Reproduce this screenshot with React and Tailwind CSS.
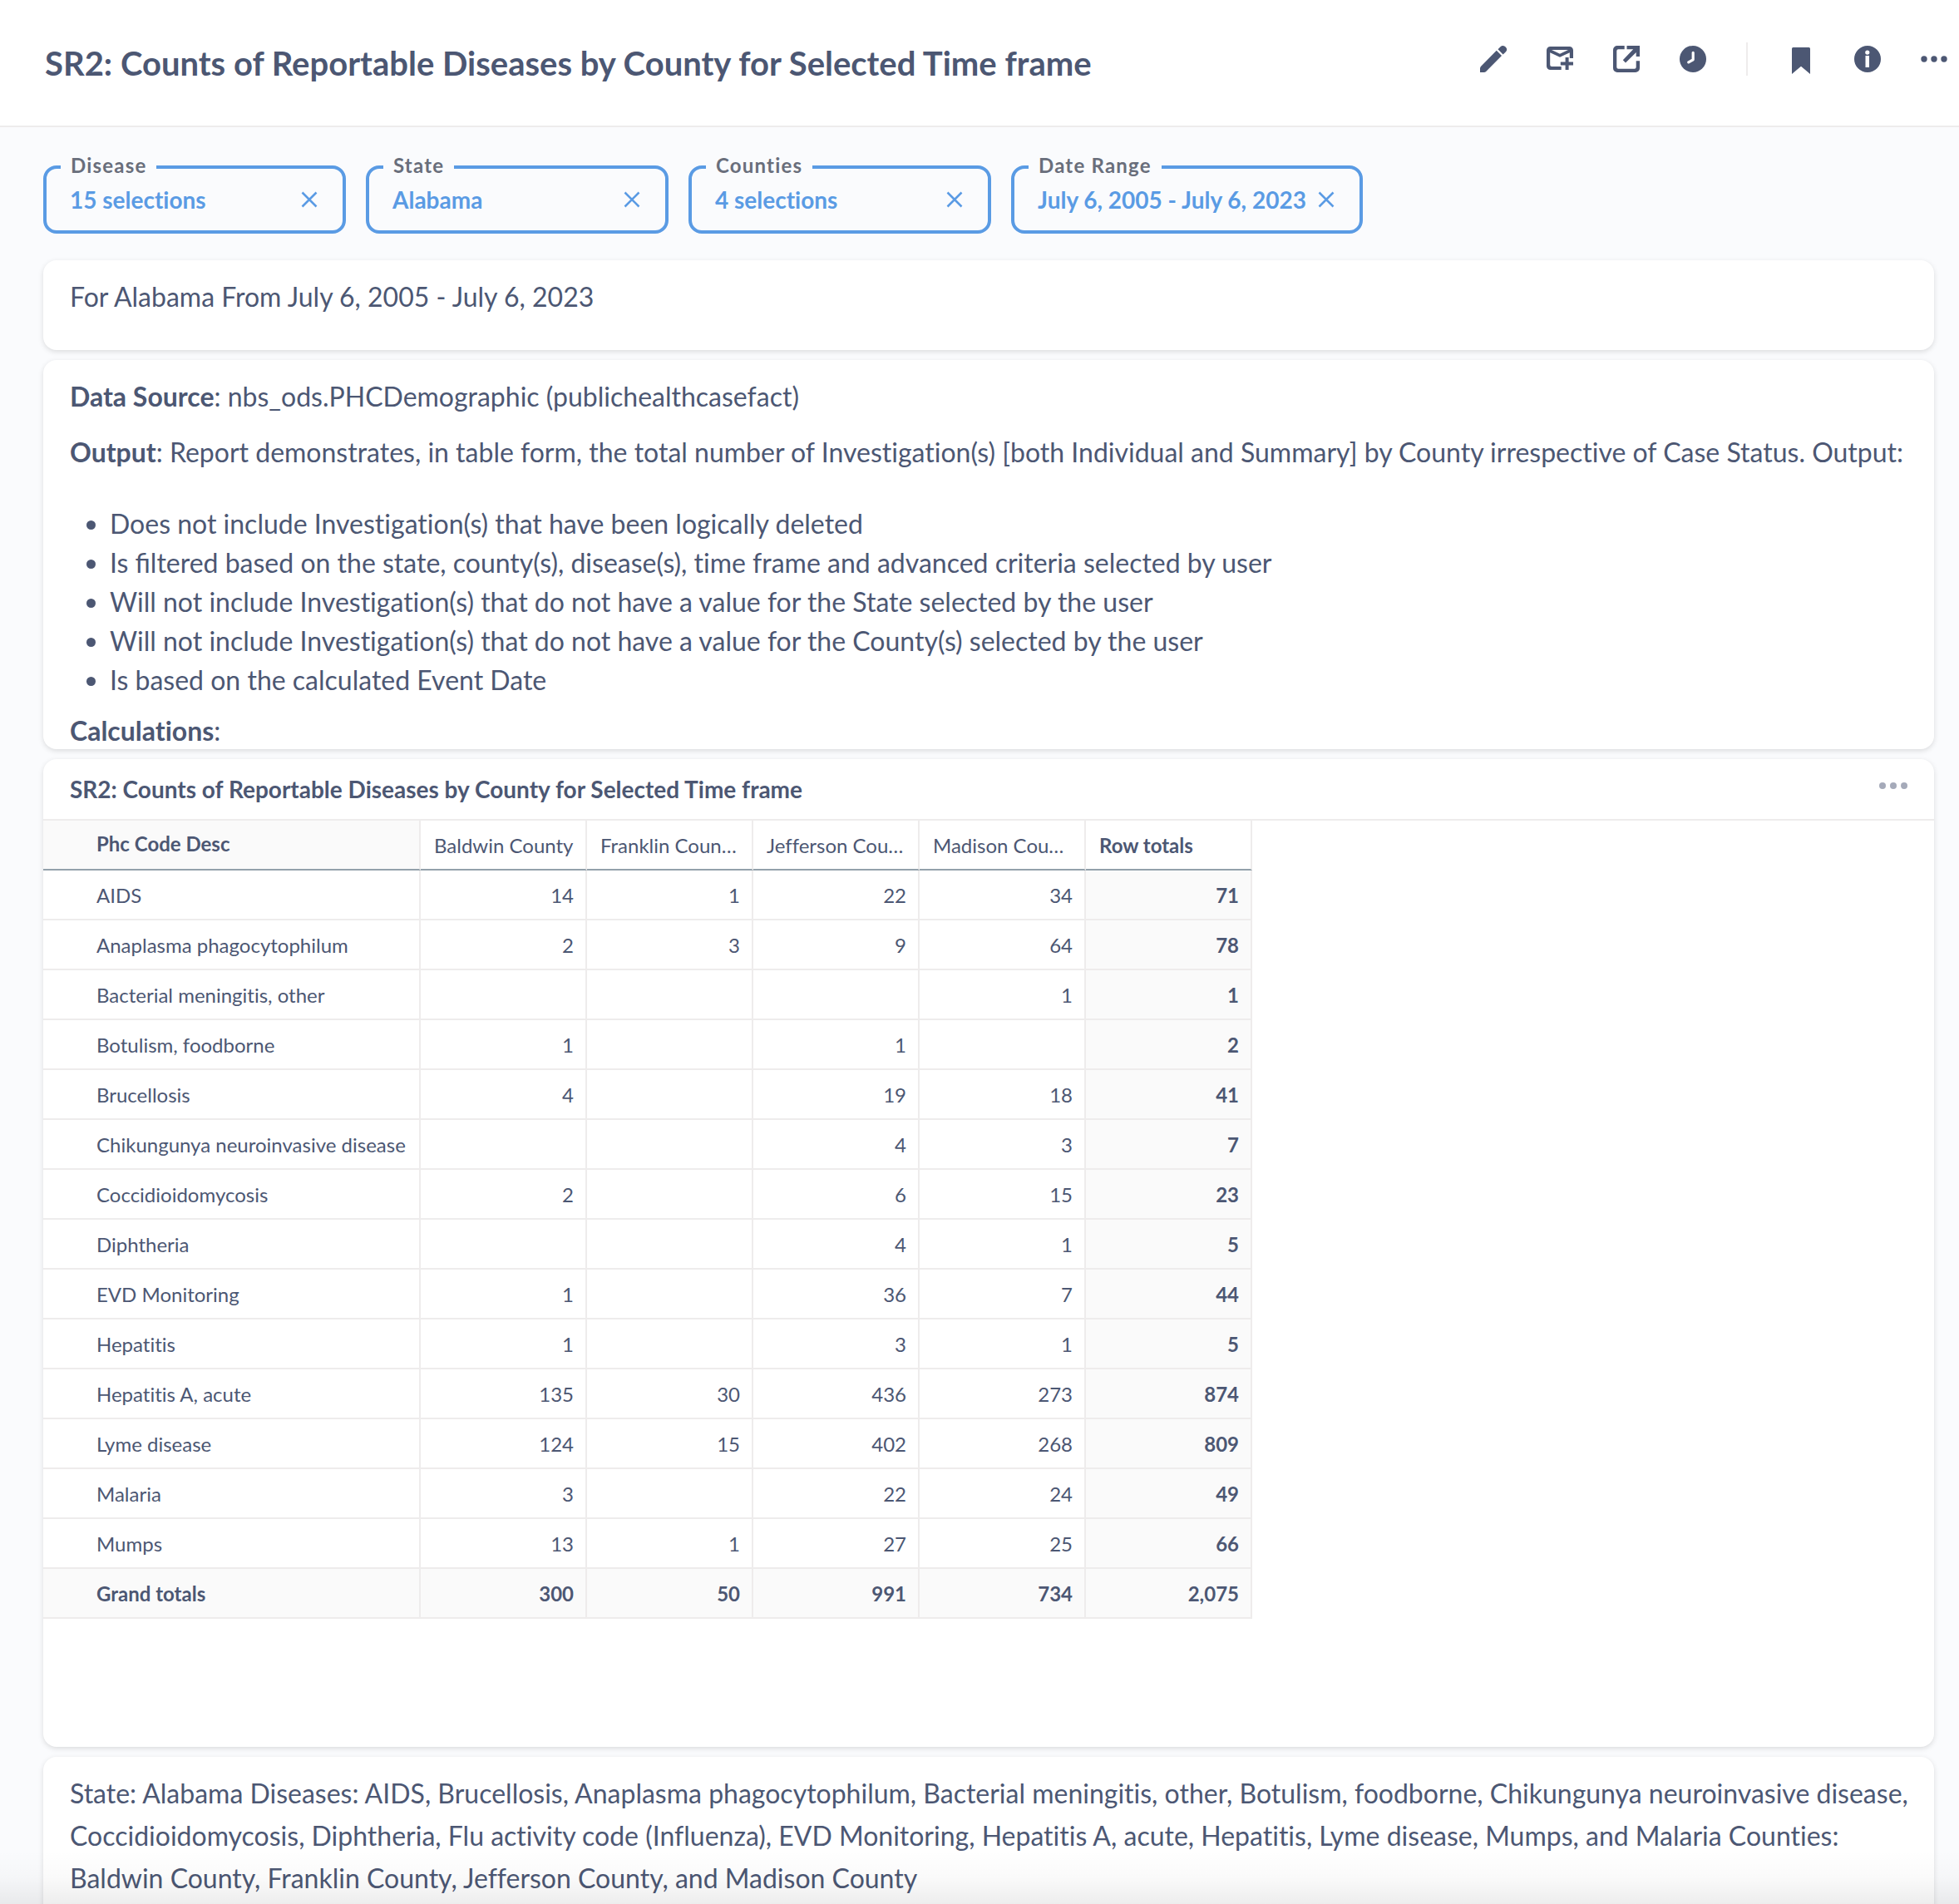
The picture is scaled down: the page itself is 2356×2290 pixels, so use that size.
import React from "react";

const filters = [
  { label: "Disease", value: "15 selections" },
  { label: "State", value: "Alabama" },
  { label: "Counties", value: "4 selections" },
  { label: "Date Range", value: "July 6, 2005 - July 6, 2023" },
];

const columns = ["Baldwin County", "Franklin Coun…", "Jefferson Cou…", "Madison Cou…"];

const rows = [
  ["AIDS", "14", "1", "22", "34", "71"],
  ["Anaplasma phagocytophilum", "2", "3", "9", "64", "78"],
  ["Bacterial meningitis, other", "", "", "", "1", "1"],
  ["Botulism, foodborne", "1", "", "1", "", "2"],
  ["Brucellosis", "4", "", "19", "18", "41"],
  ["Chikungunya neuroinvasive disease", "", "", "4", "3", "7"],
  ["Coccidioidomycosis", "2", "", "6", "15", "23"],
  ["Diphtheria", "", "", "4", "1", "5"],
  ["EVD Monitoring", "1", "", "36", "7", "44"],
  ["Hepatitis", "1", "", "3", "1", "5"],
  ["Hepatitis A, acute", "135", "30", "436", "273", "874"],
  ["Lyme disease", "124", "15", "402", "268", "809"],
  ["Malaria", "3", "", "22", "24", "49"],
  ["Mumps", "13", "1", "27", "25", "66"],
];

const totals = ["300", "50", "991", "734", "2,075"];

function IconButton({ label, children }) {
  return (
    <button type="button" aria-label={label} className="size-8 shrink-0 text-[#4c5773]">
      <svg viewBox="0 0 32 32" className="block size-8 overflow-visible" fill="currentColor" aria-hidden="true">
        {children}
      </svg>
    </button>
  );
}

function Header() {
  return (
    <header className="flex h-[153px] shrink-0 items-start justify-between border-b-2 border-[#eeecec] bg-white pr-[14px] pl-[54px]">
      <h1 className="pt-[52px] text-[40px] leading-[48px] font-bold">
        SR2: Counts of Reportable Diseases by County for Selected Time frame
      </h1>
      <div className="flex items-center gap-12 pt-[51px]">
        <IconButton label="Edit dashboard">
          <path d="M19.800 5.800 26 12 7.200 31a3.500 3.500 0 0 1-2.500 1H0v-4.500a4 4 0 0 1 1.100-2.700zM21.500 4.200l3-3a4.200 4.200 0 0 1 6.200.2 4.400 4.400 0 0 1 .1 6.100l-3.200 3z" />
        </IconButton>
        <IconButton label="Subscriptions">
          <path
            fillRule="evenodd"
            d="M4.500 1h23A4.500 4.500 0 0 1 32 5.500V15h-4.200V8.300L16 13.800 4.200 8.300v14.700a2 2 0 0 0 2 2h11.500v4H4.500A4.500 4.500 0 0 1 0 24.500v-19A4.500 4.500 0 0 1 4.500 1zm1.500 4 10 4.800L26 5z"
          />
          <path d="M22.600 14h4v5.500H32v4h-5.400V29h-4v-5.500h-5.800v-4h5.800z" />
        </IconButton>
        <IconButton label="Sharing">
          <path d="M13.700 0v4.300H6.300a2 2 0 0 0-2 2v19.400a2 2 0 0 0 2 2h19.400a2 2 0 0 0 2-2v-7.500H32V27a5 5 0 0 1-5 5H5a5 5 0 0 1-5-5V5a5 5 0 0 1 5-5zM16.500 0H32v13h-4.300V8L15 20.400l-3.200-3.200L24.200 4.300h-7.700z" />
        </IconButton>
        <IconButton label="Auto-refresh">
          <circle cx="16" cy="16" r="16" />
          <path d="M16.200 8.300v8.500l-5.400 3.100" fill="none" stroke="#fff" strokeWidth="3.200" strokeLinecap="round" strokeLinejoin="round" />
        </IconButton>
        <span className="h-10 w-[2px] bg-[#eeecec]" />
        <IconButton label="Bookmark">
          <path d="M6.500 2h19A1.500 1.500 0 0 1 27 3.500V34l-11-9.200L5 34V3.500A1.500 1.500 0 0 1 6.500 2z" />
        </IconButton>
        <IconButton label="Info">
          <path
            fillRule="evenodd"
            d="M16 0a16 16 0 1 1 0 32 16 16 0 0 1 0-32zm-.2 5.500a2.600 2.600 0 1 0 0 5.200 2.600 2.600 0 0 0 0-5.200zM13.500 12v14H18V12z"
          />
        </IconButton>
        <IconButton label="More options">
          <circle cx="4" cy="16" r="3.700" />
          <circle cx="16" cy="16" r="3.700" />
          <circle cx="28" cy="16" r="3.700" />
        </IconButton>
      </div>
    </header>
  );
}

function Filter({ label, value }) {
  return (
    <fieldset className="relative h-[82px] min-w-[364px] rounded-2xl border-4 border-[#5a9be4]">
      <legend className="absolute -top-[18px] left-[17px] bg-[#fafbfd] px-3 text-[24px] leading-7 font-bold tracking-wider text-[#696e7b]">
        {label}
      </legend>
      <div className="flex h-full items-center justify-between gap-3 px-7">
        <button type="button" className="text-[28px] leading-8 font-bold whitespace-nowrap text-[#5a9be4]">
          {value}
        </button>
        <button type="button" aria-label={"Clear " + label} className="size-6 shrink-0 text-[#5a9be4]">
          <svg viewBox="0 0 24 24" className="block size-6" fill="none" stroke="currentColor" strokeWidth="2.500" aria-hidden="true">
            <path d="M3.500 3.500l17 17M20.500 3.500l-17 17" />
          </svg>
        </button>
      </div>
    </fieldset>
  );
}

function Card({ className, children }) {
  return (
    <section className={"shrink-0 overflow-hidden rounded-2xl bg-white shadow-[0_2px_6px_rgba(0,0,0,0.13)] " + className}>
      {children}
    </section>
  );
}

function Cell({ children, strong }) {
  return (
    <td className={"border-r-2 border-b-2 border-[#eeecec] pt-0.5 pr-[14px] text-right " + (strong ? "bg-[#fafafa] font-bold" : "")}>
      {children}
    </td>
  );
}

function ReportTable() {
  return (
    <table className="w-[1454px] table-fixed border-separate border-spacing-0 text-[24px] leading-[30px]">
      <colgroup>
        <col className="w-[454px]" />
        <col />
        <col />
        <col />
        <col />
        <col />
      </colgroup>
      <thead>
        <tr className="h-[60px] text-left">
          <th scope="col" className="border-r-2 border-b-2 border-r-[#eeecec] border-b-[#93a1ab] bg-[#fafafa] pb-0.5 pl-16 font-bold">
            Phc Code Desc
          </th>
          {columns.map((c) => (
            <th key={c} scope="col" className="border-r-2 border-b-2 border-r-[#eeecec] border-b-[#93a1ab] pt-0.5 pr-[14px] pl-4 font-normal whitespace-nowrap">
              {c}
            </th>
          ))}
          <th scope="col" className="border-r-2 border-b-2 border-r-[#eeecec] border-b-[#93a1ab] px-4 pt-0.5 font-bold">
            Row totals
          </th>
        </tr>
      </thead>
      <tbody>
        {rows.map(([name, ...values]) => (
          <tr key={name} className="h-[60px]">
            <th scope="row" className="border-r-2 border-b-2 border-[#eeecec] pt-0.5 pl-16 text-left font-normal whitespace-nowrap">
              {name}
            </th>
            {values.map((v, i) => (
              <Cell key={i} strong={i === 4}>{v}</Cell>
            ))}
          </tr>
        ))}
      </tbody>
      <tfoot>
        <tr className="h-[60px]">
          <th scope="row" className="border-r-2 border-b-2 border-[#eeecec] bg-[#fafafa] pt-0.5 pl-16 text-left font-bold">
            Grand totals
          </th>
          {totals.map((v) => (
            <Cell key={v} strong>{v}</Cell>
          ))}
        </tr>
      </tfoot>
    </table>
  );
}

export default function App() {
  return (
    <div className="relative flex h-screen flex-col overflow-hidden bg-[#fafbfd] font-['Lato',sans-serif] text-[#4c5773] [font-variant-ligatures:none]">
      <Header />
      <div className="flex shrink-0 gap-6 pt-[46px] pb-8 pl-[52px]">
        {filters.map((f) => (
          <Filter key={f.label} {...f} />
        ))}
      </div>
      <main className="flex flex-col gap-3 pr-[30px] pl-[52px] text-[32px] leading-[51px]">
        <Card className="h-[108px] px-8 pt-[18px]">
          <p>For Alabama From July 6, 2005 - July 6, 2023</p>
        </Card>
        <Card className="h-[468px] px-8 pt-[18px]">
          <p>
            <strong>Data Source</strong>: nbs_ods.PHCDemographic (publichealthcasefact)
          </p>
          <p className="mt-4">
            <strong>Output</strong>: Report demonstrates, in table form, the total number of Investigation(s) [both
            Individual and Summary] by County irrespective of Case Status. Output:
          </p>
          <ul className="mt-[37px] list-disc pl-12 leading-[47px]">
            <li>Does not include Investigation(s) that have been logically deleted</li>
            <li>
              Is <span className="[font-variant-ligatures:normal]">filtered</span> based on the state, county(s),
              disease(s), time frame and advanced criteria selected by user
            </li>
            <li>Will not include Investigation(s) that do not have a value for the State selected by the user</li>
            <li>Will not include Investigation(s) that do not have a value for the County(s) selected by the user</li>
            <li>Is based on the calculated Event Date</li>
          </ul>
          <p className="mt-3">
            <strong>Calculations</strong>:
          </p>
        </Card>
        <Card className="h-[1188px]">
          <div className="flex h-[74px] items-center justify-between border-b-2 border-[#eeecec] pr-8 pl-8">
            <h2 className="text-[28px] leading-9 font-bold">
              SR2: Counts of Reportable Diseases by County for Selected Time frame
            </h2>
            <button type="button" aria-label="Card options" className="mb-2 text-[#a5aab9]">
              <svg viewBox="0 0 34 8" className="block h-2 w-[34px]" fill="currentColor" aria-hidden="true">
                <circle cx="4" cy="4" r="4" />
                <circle cx="17" cy="4" r="4" />
                <circle cx="30" cy="4" r="4" />
              </svg>
            </button>
          </div>
          <ReportTable />
        </Card>
        <Card className="h-[240px] pt-[18px] pr-5 pl-8">
          <p>
            State: Alabama Diseases: AIDS, Brucellosis, Anaplasma phagocytophilum, Bacterial meningitis, other, Botulism,
            foodborne, Chikungunya neuroinvasive disease, Coccidioidomycosis, Diphtheria, Flu activity code (Influenza),
            EVD Monitoring, Hepatitis A, acute, Hepatitis, Lyme disease, Mumps, and Malaria Counties: Baldwin County,
            Franklin County, Jefferson County, and Madison County
          </p>
        </Card>
      </main>
      <div className="pointer-events-none absolute inset-x-0 bottom-0 h-16 bg-linear-to-t from-black/7 via-black/2 to-transparent" />
    </div>
  );
}
